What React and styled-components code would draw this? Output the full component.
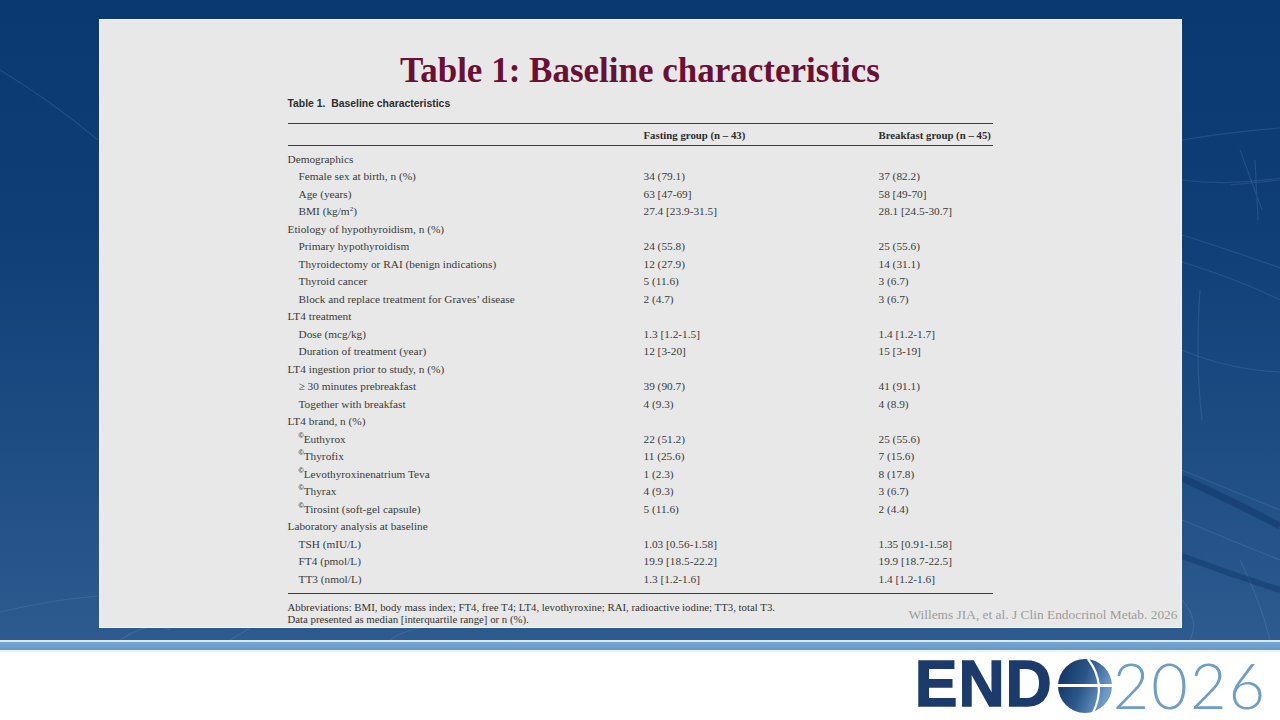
import React from "react";
import styled, { createGlobalStyle } from "styled-components";

const GlobalStyle = createGlobalStyle`
  html, body {
    margin: 0;
    padding: 0;
    background: #ffffff;
  }
  #root {
    width: 1280px;
    height: 720px;
    overflow: hidden;
  }
`;

const Slide = styled.div`
  width: 1280px;
  height: 720px;
  display: flex;
  flex-direction: column;
`;

const Stage = styled.div`
  position: relative;
  height: 640px;
  flex-shrink: 0;
  display: flex;
  justify-content: center;
  padding-top: 19px;
  box-sizing: border-box;
  overflow: hidden;
  background: linear-gradient(180deg, #0a3870 0%, #0f3d75 35%, #1e4d84 70%, #2d5b90 100%);
`;

const Veins = styled.svg`
  position: absolute;
  inset: 0;
  width: 100%;
  height: 100%;
  pointer-events: none;
`;

const Panel = styled.div`
  position: relative;
  z-index: 1;
  width: 1083px;
  height: 609px;
  box-sizing: border-box;
  background: #e8e8e8;
  border: 1px solid #f3f5f8;
  display: flex;
  flex-direction: column;
  padding-top: 31px;
`;

const Title = styled.h1`
  margin: 0;
  text-align: center;
  font-family: "Liberation Serif", "Times New Roman", serif;
  font-weight: 700;
  font-size: 35px;
  line-height: 40px;
  color: #6a1034;
`;

const TableBlock = styled.div`
  margin-left: 188px;
  width: 705px;
  color: #3a3a3a;
  font-family: "Liberation Serif", "Times New Roman", serif;
  font-size: 11.3px;
`;

const Caption = styled.div`
  margin-top: 6px;
  font-family: "Liberation Sans", Arial, sans-serif;
  font-weight: 700;
  font-size: 10.4px;
  line-height: 14px;
  color: #2e2e2e;
`;

const HeaderRow = styled.div`
  margin-top: 12px;
  display: grid;
  grid-template-columns: 356px 235px 1fr;
  align-items: center;
  height: 21px;
  white-space: nowrap;
  border-top: 1.5px solid #3c3c3c;
  border-bottom: 1.5px solid #3c3c3c;
  font-weight: 700;
  font-size: 10.8px;
  color: #2e2e2e;
`;

const Body = styled.div`
  padding: 4px 0 5px;
  border-bottom: 1.5px solid #3c3c3c;
`;

const Row = styled.div`
  display: grid;
  grid-template-columns: 356px 235px 1fr;
  align-items: center;
  height: 17.5px;
  white-space: nowrap;
`;

const Label = styled.span`
  padding-left: ${({ $indent }) => ($indent ? "11px" : "0")};
`;

const Sup = styled.sup`
  font-size: 0.62em;
  line-height: 0;
  vertical-align: 0.55em;
`;

const Mark = styled.span`
  font-family: "Liberation Sans", Arial, sans-serif;
  font-weight: 700;
  font-size: 0.62em;
  line-height: 0;
  vertical-align: 0.65em;
  color: #333333;
`;

const BottomRow = styled.div`
  margin-left: 188px;
  margin-top: 7px;
  padding-right: 3px;
  display: flex;
  justify-content: space-between;
  align-items: center;
`;

const Notes = styled.div`
  font-family: "Liberation Serif", "Times New Roman", serif;
  font-size: 10.8px;
  line-height: 12px;
  color: #333333;
`;

const Citation = styled.div`
  padding-top: 4px;
  font-family: "Liberation Serif", "Times New Roman", serif;
  font-size: 13.4px;
  line-height: 14px;
  color: #9c9c9c;
`;

const Stripe = styled.div`
  height: 12px;
  flex-shrink: 0;
  box-sizing: border-box;
  border-top: 2px solid #dce8f4;
  border-bottom: 2px solid #eef4fa;
  background: linear-gradient(180deg, #78a6d4 0%, #6697c9 100%);
`;

const Footer = styled.div`
  flex: 1;
  display: flex;
  justify-content: flex-end;
  align-items: center;
  padding: 0 13px 4px 0;
  background: #ffffff;
  border-bottom: 2px solid #9a9a9a;
`;

const Logo = styled.div`
  display: flex;
  align-items: center;
`;

const LogoWord = styled.span`
  font-family: "Liberation Sans", Arial, sans-serif;
  font-weight: 700;
  font-size: 64px;
  line-height: 1;
  letter-spacing: 1px;
  color: #1c3a6a;
  -webkit-text-stroke: 1.5px #1c3a6a;
`;

const LogoYear = styled.span`
  font-family: Lato, "Open Sans", sans-serif;
  font-weight: 300;
  font-size: 63px;
  line-height: 1;
  letter-spacing: 2px;
  color: #6f9dc4;
`;

const Globe = styled.svg`
  width: 56px;
  height: 56px;
  margin: 3px 0 0 4px;
  flex-shrink: 0;
`;

const rows = [
  { label: "Demographics", head: true },
  { label: "Female sex at birth, n (%)", a: "34 (79.1)", b: "37 (82.2)" },
  { label: "Age (years)", a: "63 [47-69]", b: "58 [49-70]" },
  { label: <>BMI (kg/m<Sup>2</Sup>)</>, a: "27.4 [23.9-31.5]", b: "28.1 [24.5-30.7]" },
  { label: "Etiology of hypothyroidism, n (%)", head: true },
  { label: "Primary hypothyroidism", a: "24 (55.8)", b: "25 (55.6)" },
  { label: "Thyroidectomy or RAI (benign indications)", a: "12 (27.9)", b: "14 (31.1)" },
  { label: "Thyroid cancer", a: "5 (11.6)", b: "3 (6.7)" },
  { label: "Block and replace treatment for Graves’ disease", a: "2 (4.7)", b: "3 (6.7)" },
  { label: "LT4 treatment", head: true },
  { label: "Dose (mcg/kg)", a: "1.3 [1.2-1.5]", b: "1.4 [1.2-1.7]" },
  { label: "Duration of treatment (year)", a: "12 [3-20]", b: "15 [3-19]" },
  { label: "LT4 ingestion prior to study, n (%)", head: true },
  { label: "≥ 30 minutes prebreakfast", a: "39 (90.7)", b: "41 (91.1)" },
  { label: "Together with breakfast", a: "4 (9.3)", b: "4 (8.9)" },
  { label: "LT4 brand, n (%)", head: true },
  { label: "Euthyrox", brand: true, a: "22 (51.2)", b: "25 (55.6)" },
  { label: "Thyrofix", brand: true, a: "11 (25.6)", b: "7 (15.6)" },
  { label: "Levothyroxinenatrium Teva", brand: true, a: "1 (2.3)", b: "8 (17.8)" },
  { label: "Thyrax", brand: true, a: "4 (9.3)", b: "3 (6.7)" },
  { label: "Tirosint (soft-gel capsule)", brand: true, a: "5 (11.6)", b: "2 (4.4)" },
  { label: "Laboratory analysis at baseline", head: true },
  { label: "TSH (mIU/L)", a: "1.03 [0.56-1.58]", b: "1.35 [0.91-1.58]" },
  { label: "FT4 (pmol/L)", a: "19.9 [18.5-22.2]", b: "19.9 [18.7-22.5]" },
  { label: "TT3 (nmol/L)", a: "1.3 [1.2-1.6]", b: "1.4 [1.2-1.6]" },
];

// faint vein lines in the background photo
const veinPaths = [
  "M0 70 Q50 100 98 140",
  "M0 612 Q50 600 98 596",
  "M120 640 Q150 620 170 630",
  "M230 640 L250 628",
  "M390 640 Q400 632 420 628",
  "M1182 140 Q1230 132 1280 128",
  "M1182 180 Q1230 186 1280 178",
  "M1240 150 L1262 210 M1230 185 L1280 180 M1255 160 L1258 220",
  "M1182 235 Q1230 250 1280 268",
  "M1182 262 Q1240 280 1280 300",
  "M1200 290 Q1195 360 1202 420",
  "M1182 350 Q1230 370 1280 372",
  "M1182 470 Q1230 490 1280 510",
  "M1182 520 Q1230 540 1280 560",
  "M1240 560 Q1260 600 1270 640",
  "M1182 600 Q1200 620 1190 640",
];

const App = () => {
  return (
    <>
      <GlobalStyle />
      <Slide>
        <Stage>
          <Veins viewBox="0 0 1280 640" preserveAspectRatio="none">
            {veinPaths.map((d, i) => (
              <path key={i} d={d} fill="none" stroke="#7fa6d6" strokeOpacity="0.18" strokeWidth="1.2" />
            ))}
            <path d="M1182 478 Q1230 500 1280 526" fill="none" stroke="#0d3468" strokeOpacity="0.5" strokeWidth="7" />
            <path d="M1182 556 Q1230 574 1280 590" fill="none" stroke="#0d3468" strokeOpacity="0.45" strokeWidth="6" />
          </Veins>
          <Panel>
            <Title>Table 1: Baseline characteristics</Title>
            <TableBlock>
              <Caption>Table 1.&nbsp; Baseline characteristics</Caption>
              <HeaderRow>
                <span />
                <span>Fasting group (n – 43)</span>
                <span>Breakfast group (n – 45)</span>
              </HeaderRow>
              <Body>
                {rows.map((r, i) => (
                  <Row key={i}>
                    <Label $indent={!r.head}>
                      {r.brand && <Mark>©</Mark>}
                      {r.label}
                    </Label>
                    <span>{r.a}</span>
                    <span>{r.b}</span>
                  </Row>
                ))}
              </Body>
            </TableBlock>
            <BottomRow>
              <Notes>
                Abbreviations: BMI, body mass index; FT4, free T4; LT4, levothyroxine; RAI, radioactive iodine; TT3, total T3.
                <br />
                Data presented as median [interquartile range] or n (%).
              </Notes>
              <Citation>Willems JIA, et al. J Clin Endocrinol Metab. 2026</Citation>
            </BottomRow>
          </Panel>
        </Stage>
        <Stripe />
        <Footer>
          <Logo>
            <LogoWord>END</LogoWord>
            <Globe viewBox="0 0 56 56">
              <defs>
                <linearGradient id="globeFill" x1="0" y1="0" x2="1" y2="0.4">
                  <stop offset="0" stopColor="#0e2c5c" />
                  <stop offset="0.55" stopColor="#2b568a" />
                  <stop offset="1" stopColor="#6e9bc8" />
                </linearGradient>
              </defs>
              <circle cx="28" cy="28" r="27" fill="url(#globeFill)" />
              <rect x="0" y="26" width="56" height="3" fill="#ffffff" />
              <path d="M31 1 Q50 26 36 55" fill="none" stroke="#ffffff" strokeWidth="2.2" />
            </Globe>
            <LogoYear>2026</LogoYear>
          </Logo>
        </Footer>
      </Slide>
    </>
  );
};

export default App;
